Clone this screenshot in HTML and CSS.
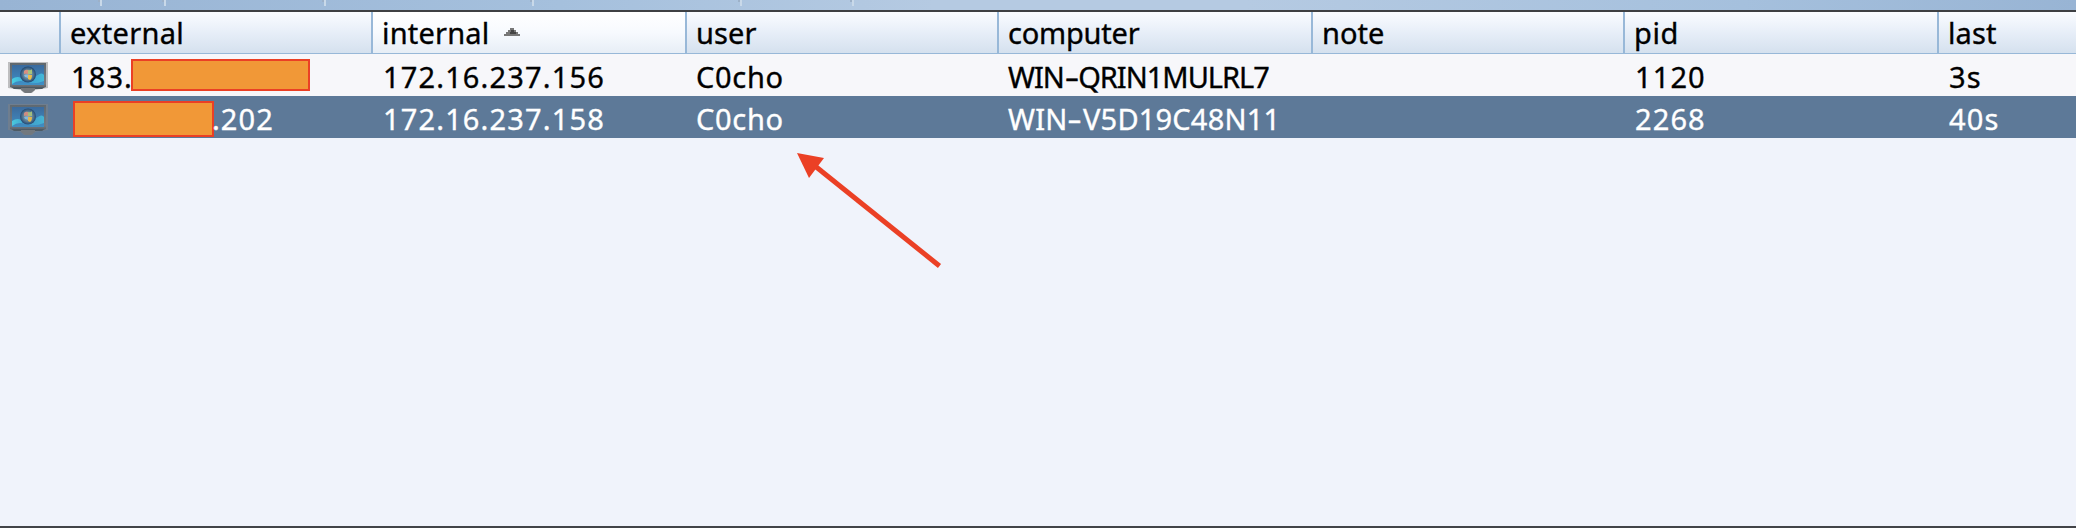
FILE: index.html
```html
<!DOCTYPE html>
<html lang="en">
<head>
<meta charset="utf-8">
<title>Sessions</title>
<link rel="stylesheet" href="styles.css">
</head>
<body>
<svg width="0" height="0" class="defs" aria-hidden="true">
  <defs>
    <linearGradient id="screen" x1="0" y1="0" x2="0" y2="1"><stop offset="0" stop-color="#3a6a9e"/><stop offset="1" stop-color="#3f90c6"/></linearGradient>
    <linearGradient id="frame" x1="0" y1="0" x2="0" y2="1"><stop offset="0" stop-color="#60686e"/><stop offset=".8" stop-color="#777b80"/><stop offset="1" stop-color="#505860"/></linearGradient>
    <linearGradient id="wave" x1="0" y1="0" x2="1" y2="0"><stop offset="0" stop-color="#49d0e3"/><stop offset=".5" stop-color="#3e9fd0"/><stop offset="1" stop-color="#43b9d8"/></linearGradient>
    <radialGradient id="orb"><stop offset="0" stop-color="#9aa9ae"/><stop offset=".6" stop-color="#5d8098"/><stop offset="1" stop-color="#1f4670"/></radialGradient>
    <symbol id="monitor" viewBox="0 0 40 32">
      <path d="M0 0H40V26L27 28L24 31H16L13 28L0 26Z" fill="#858585" opacity=".5"/>
      <path d="M2 1H38V25L33 27H7L2 25Z" fill="url(#frame)"/>
      <path d="M4 3H36V23H4Z" fill="url(#screen)"/>
      <path d="M4 17Q10 13 15 17T27 15T36 13V19Q26 23 18 20T4 22Z" fill="url(#wave)"/>
      <circle cx="20" cy="12.500" r="8" fill="url(#orb)"/>
      <path d="M16 9q2-2 4-1v4q-2-1-4 0z" fill="#d98f80"/>
      <path d="M20 8q3 1 4-1v5h-4z" fill="#a8c37b"/>
      <path d="M16 13q2-1 4 0v3q-2-1-3-1z" fill="#86bce2"/>
      <path d="M20 13h4q0 4-2 5l-2-1z" fill="#eebd4a"/>
      <path d="M4 25H36L34 27H6Z" fill="#4d5961"/>
      <path d="M13 26H27V28L23 31H17L13 28Z" fill="#74787c"/>
    </symbol>
  </defs>
</svg>
<div class="window">
  <div class="toolbar"><i class="t1"></i><i class="t2"></i><i class="t3"></i><i class="t4"></i><i class="t5"></i><i class="t6"></i></div>
  <div class="grid header">
    <div class="cell"></div>
    <div class="cell"><span class="h-external">external</span></div>
    <div class="cell sorted"><span class="h-internal">internal</span><svg class="sort" width="16" height="8" viewBox="0 0 16 8"><path d="M6 0H10V2H12V4H14V6H16V8H0V6H2V4H4V2H6Z" fill="#777"/><path d="M7 2H10V4H12V6H6V4H7Z" fill="#444"/></svg></div>
    <div class="cell"><span class="h-user">user</span></div>
    <div class="cell"><span class="h-computer">computer</span></div>
    <div class="cell"><span class="h-note">note</span></div>
    <div class="cell"><span class="h-pid">pid</span></div>
    <div class="cell"><span class="h-last">last</span></div>
  </div>
  <div class="grid row">
    <div class="icon"><svg width="40" height="32"><use href="#monitor"/></svg></div>
    <div class="cell"><span class="ext">183.</span><b class="mask mask-tail"></b></div>
    <div class="cell"><span class="ip">172.16.237.156</span></div>
    <div class="cell"><span class="name">C0cho</span></div>
    <div class="cell"><span class="host1">WIN<span class="dash">-</span>QRIN1MULRL7</span></div>
    <div class="cell"></div>
    <div class="cell"><span class="num">1120</span></div>
    <div class="cell"><span class="num">3s</span></div>
  </div>
  <div class="grid row selected">
    <div class="icon"><svg width="40" height="32"><use href="#monitor"/></svg></div>
    <div class="cell"><b class="mask mask-head"></b><span class="ext">.202</span></div>
    <div class="cell"><span class="ip">172.16.237.158</span></div>
    <div class="cell"><span class="name">C0cho</span></div>
    <div class="cell"><span class="host2">WIN<span class="dash">-</span>V5D19C48N11</span></div>
    <div class="cell"></div>
    <div class="cell"><span class="num">2268</span></div>
    <div class="cell"><span class="num">40s</span></div>
  </div>
  <svg class="arrow" width="146" height="116" viewBox="0 0 146 116"><path d="M18 13L142.500 113" stroke="#eb4025" stroke-width="5"/><path d="M0 0L27 5L12 25Z" fill="#eb4025"/></svg>
</div>
</body>
</html>
```

FILE: styles.css
```css
* { box-sizing: border-box; }
body { margin: 0; overflow: hidden; font: 29px/40px "Lucida Grande", "Noto Sans", sans-serif; color: #000; -webkit-text-stroke: .35px currentColor; }
.defs { position: absolute; }
.window { position: relative; display: flex; flex-direction: column; height: 528px; background: #f0f3fb; border-bottom: 2px solid #424448; }
.toolbar { display: flex; height: 12px; flex: none; border-bottom: 2px solid #3e4043; background: linear-gradient(90deg, #98b4d4, #a5c0dd 27%, #b5cae2 45%, #b5cae2 60%, #a5c0dd 84%, #98b4d4); }
.toolbar i { width: 2px; height: 6px; background: #c9d9e9; box-shadow: -2px -4px 0 #9db1c8; }
.t1 { margin-left: 100px; }
.t2 { margin-left: 62px; }
.t3 { margin-left: 158px; }
.t4 { margin-left: 206px; }
.t5 { margin-left: 206px; }
.t6 { margin-left: 110px; }
.grid { display: grid; grid-template-columns: 61px 312px 314px 312px 314px 312px 314px 1fr; flex: none; }
.cell { display: flex; white-space: nowrap; min-width: 0; }
.header { height: 42px; border-bottom: 2px solid #98b8d8; }
.header .cell { padding-left: 9px; line-height: 41px; background: linear-gradient(#fafcff, #e7eef8 50%, #d5e1ee); border-right: 2px solid #98b8d8; }
.header .cell:last-child { border-right: 0; }
.header .sorted { background: linear-gradient(#fff, #f7fafe 50%, #e7eef6); }
.sort { margin: 16px 0 0 15px; }
.row { height: 42px; background: #f7f7fa; }
.row .cell { padding-left: 10px; line-height: 45px; }
.selected { background: #5d7998; color: #fff; }
.icon { padding: 8px 0 0 8px; line-height: 0; }
.selected .icon svg { opacity: .92; }
.mask { flex: none; background: #f19837; border: 2px solid #eb4025; }
.mask-tail { width: 179px; height: 32px; margin-top: 5px; }
.mask-head { width: 141px; height: 36px; margin: 5px 0 0 2px; }
.mask-head + .ext { margin-left: -2px; }
.ext { letter-spacing: 1.1px; }
.row .ext:first-child { width: 60px; }
.ip { letter-spacing: 1.15px; }
.name { letter-spacing: .7px; margin-left: -1px; }
.num { letter-spacing: 1.1px; }
.host1 { letter-spacing: -1px; margin-left: -1px; }
.host2 { letter-spacing: .2px; margin-left: -1px; }
.dash { display: inline-block; margin: 0 3px; transform: scaleX(1.55); }
.h-external { letter-spacing: .3px; }
.h-internal { letter-spacing: .2px; }
.h-user { letter-spacing: .1px; }
.h-computer { letter-spacing: -.2px; }
.h-note { letter-spacing: 0; }
.h-pid { letter-spacing: .6px; }
.h-last { letter-spacing: .1px; }
.arrow { position: absolute; left: 797px; top: 153px; }
```
